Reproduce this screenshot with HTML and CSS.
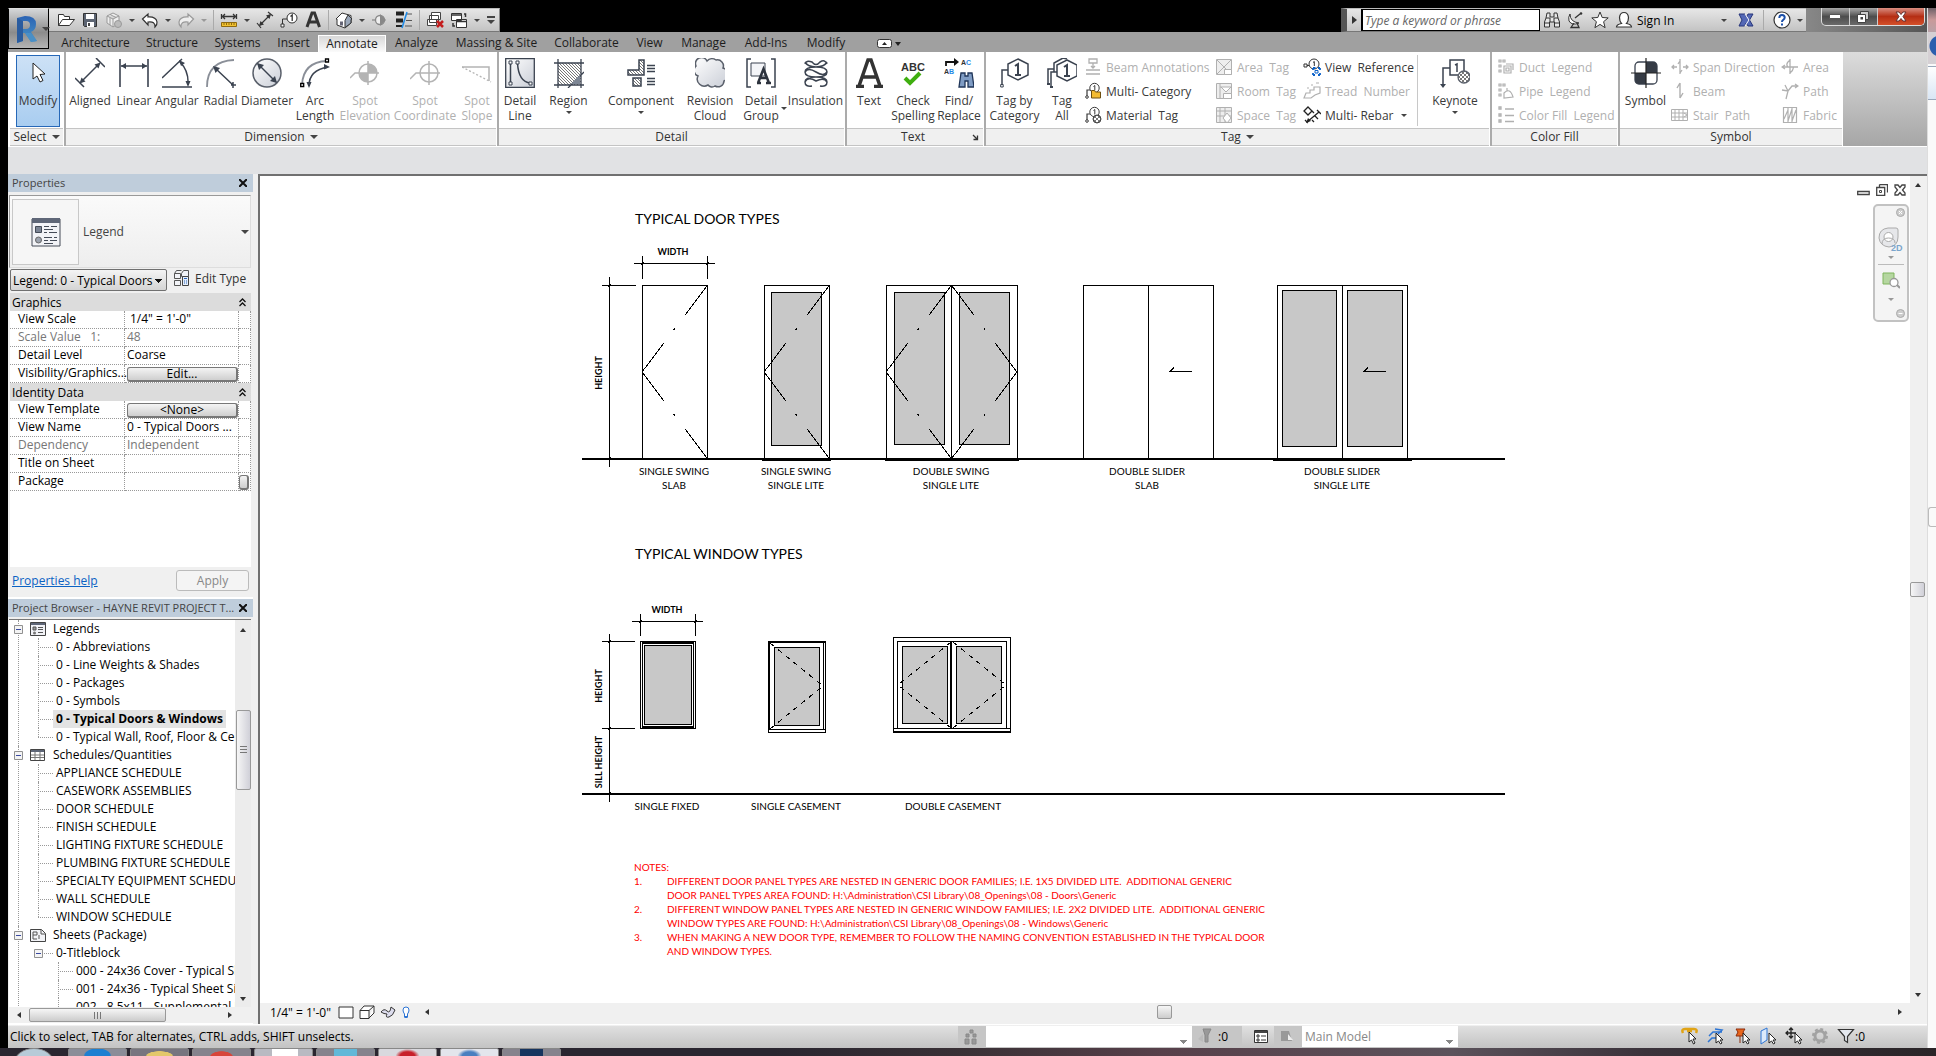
FILE: index.html
```
<!DOCTYPE html>
<html lang="en">
<head>
<meta charset="utf-8">
<title>Legend: 0 - Typical Doors &amp; Windows</title>
<link rel="stylesheet" href="styles.css">
</head>
<body>
<svg class="defs" aria-hidden="true">
  <defs>
    <linearGradient id="steel" x1="0" y1="0" x2="1" y2="1"><stop offset="0" stop-color="#fff"/><stop offset="1" stop-color="#c9cdd6"/></linearGradient>
    <linearGradient id="blueR" x1="0" y1="0" x2="0" y2="1"><stop offset="0" stop-color="#2a63b4"/><stop offset="1" stop-color="#4c97c8"/></linearGradient>
    <pattern id="hatch" width="3" height="3" patternUnits="userSpaceOnUse"><path d="M0 0l3 3" stroke="#777" stroke-width="1"/></pattern>
    <pattern id="check" width="4" height="4" patternUnits="userSpaceOnUse"><rect width="4" height="4" fill="#fff"/><path d="M0 0h2v2H0zM2 2h2v2H2z" fill="#777"/></pattern>
    <symbol id="expander" viewBox="0 0 9 9"><path d="M.5.5h8v8h-8z" fill="#f4f4f4" stroke="#919191"/><path d="M2 4.500h5" stroke="#3a4aa0"/></symbol>
    <symbol id="binoc" viewBox="0 0 18 18"><path d="M4 2h3v4h4V2h3l1 5 1.500 4v5h-5v-5H6.500v5h-5v-5L3 7z" fill="#e8e8e8" stroke="#333"/><path d="M3 7h4v4M15 7h-4v4M2 12h5M11 12h5" fill="none" stroke="#333"/></symbol>
    <symbol id="tag" viewBox="0 0 18 18"><path d="M3 15V8h3" fill="none" stroke="currentColor" stroke-width="1.200"/><circle cx="3" cy="15" r="1.300" fill="#fff" stroke="currentColor"/><circle cx="10.500" cy="6" r="4.700" fill="#fff" stroke="currentColor"/><path d="M9.500 4.500l1.300-1v5" fill="none" stroke="currentColor"/></symbol>
  </defs>
</svg>

<div class="desktop">
<div class="window">
  <header class="titlebar">
    <button class="app-button" aria-label="Application menu">
      <svg width="22" height="28" viewBox="0 0 22 28"><path d="M1 3l8-2q11 0 11 8 0 6-5 8l6 9-6 1-6-9H7v8l-6 2zM7 6v8h3q4 0 4-4t-4-4z" fill="url(#blueR)" fill-rule="evenodd"/><path d="M1 3l6 3v20l-6 2z" fill="#2a5c9f"/><path d="M9 18h6l6 8-6 1z" fill="#4a8fc6"/></svg>
      <i class="dd dd-lg"></i>
    </button>
    <div class="qat">
      <button aria-label="Open"><svg viewBox="0 0 18 18"><path d="M1.500 14.500v-11h5l1 2h5v3M1.500 14.500l4-6h12l-5 6z" fill="#fff" stroke="#333"/></svg></button>
      <button aria-label="Save"><svg viewBox="0 0 18 18"><path d="M2.500 2.500h13v13h-12l-1-1z" fill="#5c6472" stroke="#333"/><path d="M5 3h8v5H5zM6 11h7v5H6z" fill="#fff"/><path d="M7 12h2v3H7z" fill="#444"/></svg></button>
      <button aria-label="Synchronize" disabled><svg viewBox="0 0 18 18"><path d="M2 5l6-3 6 3v7l-6 4-6-4zM2 5l6 3 6-3M8 8v8M5 3.500l6 3M5 7v7" fill="#eee" stroke="#999"/><circle cx="13" cy="13" r="3.500" fill="#bbb" stroke="#999"/></svg></button>
      <button class="drop" aria-label="Synchronize options"><i class="dd"></i></button>
      <button aria-label="Undo"><svg viewBox="0 0 18 18"><path d="M1.500 8L7 3v3q8-.5 9 5 .3 3-2 5 .5-6-7-5v3z" fill="#fff" stroke="#333" stroke-width="1.200"/></svg></button>
      <button class="drop" aria-label="Undo list"><i class="dd"></i></button>
      <button aria-label="Redo" disabled><svg viewBox="0 0 18 18"><path d="M16.500 8L11 3v3q-8-.5-9 5-.3 3 2 5-.5-6 7-5v3z" fill="#eee" stroke="#999" stroke-width="1.200"/></svg></button>
      <button class="drop" aria-label="Redo list"><i class="dd dd-off"></i></button>
      <span class="sep"></span>
      <button aria-label="Measure"><svg viewBox="0 0 18 18"><path d="M1.500 3v5M16.500 3v5M2 5.500h14M5 3L2.500 5.500 5 8M13 3l2.500 2.500L13 8" fill="none" stroke="#333" stroke-width="1.300"/><path d="M1.500 11.500h15v4h-15z" fill="#f2c230" stroke="#8f6a10"/><path d="M4 12v2M6.500 12v2M9 12v2M11.500 12v2M14 12v2" stroke="#8f6a10"/></svg></button>
      <button class="drop" aria-label="Measure options"><i class="dd"></i></button>
      <button aria-label="Aligned dimension"><svg viewBox="0 0 18 18"><path d="M4 14L14 4M1 12l4 5M12 1l5 4" stroke="#333" stroke-width="1.200"/><path d="M3 15l1.500-5L8 13.500zM15 3l-5 1.500L13.500 8z" fill="#333"/></svg></button>
      <button aria-label="Tag by category"><svg viewBox="0 0 18 18"><path d="M2.500 14V8H7" fill="none" stroke="#333"/><path d="M1 13h3v3H1z" fill="#fff" stroke="#333"/><circle cx="12" cy="7" r="5" fill="#fff" stroke="#333"/><path d="M10.500 5.500L12.200 4v6" fill="none" stroke="#333" stroke-width="1.300"/></svg></button>
      <button aria-label="Text"><svg viewBox="0 0 18 18"><path d="M3 16L8 2h2.500l5 14M5 11h8" fill="none" stroke="#333" stroke-width="3"/></svg></button>
      <span class="sep"></span>
      <button aria-label="Default 3D view"><svg viewBox="0 0 18 18"><path d="M1 8l6-6 9 2.500V12l-6 5-8-3V8z" fill="#fff" stroke="#333"/><path d="M10 9.500L13 4l4 4-1 .5V12l-6 4.500z" fill="#9aa7ba" stroke="#333"/><path d="M5 10.500h3v4H5z" fill="#667"/></svg></button>
      <button class="drop" aria-label="3D view options"><i class="dd"></i></button>
      <button aria-label="Section"><svg viewBox="0 0 18 18"><path d="M1 9h3" stroke="#777"/><circle cx="9" cy="9" r="4.500" fill="#eee" stroke="#888" stroke-width="1.300"/><path d="M9 3v12l6-6z" fill="#888"/></svg></button>
      <button aria-label="Thin lines"><svg viewBox="0 0 18 18"><path d="M1 2.500h8M1 9.500h7" stroke="#222" stroke-width="4"/><path d="M1 15h6" stroke="#222" stroke-width="2"/><path d="M11 3h6M11 9.500h6M10 15h7" stroke="#555"/><path d="M12 1L7 17" stroke="#1e8ae6" stroke-width="1.500"/></svg></button>
      <span class="sep"></span>
      <button aria-label="Close hidden windows"><svg viewBox="0 0 18 18"><path d="M5.500 1.500h9v7h-9zM3.500 4.500h9v7h-9zM1.500 8.500h9v6h-9z" fill="#fff" stroke="#444"/><path d="M11 10l6 6M17 10l-6 6" stroke="#c41e1e" stroke-width="2.500"/></svg></button>
      <button aria-label="Switch windows"><svg viewBox="0 0 18 18"><path d="M1.500 2.500h10v7h-10zM6.500 8.500h10v8h-10z" fill="#fff" stroke="#333"/><path d="M2 4h9M7 10.500h9M3 12v3h2M14 3h1.500v3" fill="none" stroke="#333" stroke-width="1.500"/></svg></button>
      <button class="drop" aria-label="Switch windows list"><i class="dd"></i></button>
      <button class="drop" aria-label="Customize toolbar"><i class="dd dd-bar"></i></button>
    </div>
    <div class="info">
      <button class="info-toggle" aria-label="Toggle search"><svg width="5" height="8"><path d="M0 0l5 4-5 4z" fill="#333"/></svg></button>
      <input type="text" placeholder="Type a keyword or phrase" aria-label="Search help">
      <button aria-label="Search"><svg viewBox="0 0 18 18"><use href="#binoc"/></svg></button>
      <button aria-label="Communication center"><svg viewBox="0 0 18 18"><path d="M3 3q0 8 9 9-7 3-10-2-1-4 1-7z" fill="#fff" stroke="#333"/><path d="M8 7l5-4M7 12l-3 4.500h8L10 12" fill="none" stroke="#333" stroke-width="1.300"/><circle cx="14" cy="2.500" r="1.300" fill="#333"/></svg></button>
      <button aria-label="Favorites"><svg viewBox="0 0 18 18"><path d="M9 1l2.200 5.500 6 .4-4.600 3.800 1.500 6L9 13.400 3.900 16.700l1.500-6L.8 6.900l6-.4z" fill="#fff" stroke="#333"/></svg></button>
      <button class="sign-in"><svg viewBox="0 0 18 18"><path d="M1.500 16q0-2.500 5-3.500-2-2-2-6 .5-5 4.500-5t4.500 5q0 4-2 6 5 1 5 3.500z" fill="#fff" stroke="#333" stroke-width="1.200"/></svg><span>Sign In</span><i class="dd"></i></button>
      <button class="exchange" aria-label="Exchange apps"><svg viewBox="0 0 18 18"><path d="M2 3h6l1.500 3L11 3h5l-3.500 6L16 15h-5l-2-3-1.500 3H2l3-6z" fill="#5468b5" stroke="#27357a"/><path d="M8 3l4 6-4 6" fill="none" stroke="#fff"/></svg></button>
      <span class="sep"></span>
      <button class="help" aria-label="Help"><svg viewBox="0 0 18 18"><circle cx="9" cy="9" r="8" fill="#fff" stroke="#333" stroke-width="1.200"/><path d="M6.300 7q0-3 2.700-3t2.700 2.500q0 1.500-1.500 2.300Q9 9.500 9 11M9 12.500v2" fill="none" stroke="#1c50a8" stroke-width="2"/></svg></button>
      <button class="drop" aria-label="Help menu"><i class="dd"></i></button>
    </div>
    <div class="frame-corner">
      <div class="win-buttons">
        <button aria-label="Minimize"><svg width="12" height="5"><path d="M.5.5h11v4H.5z" fill="#fff" stroke="#555"/></svg></button>
        <button aria-label="Restore"><svg width="12" height="12"><path d="M3.500.5h8v8h-8z" fill="#ccc" stroke="#444"/><path d="M.5 3.500h8v8h-8z" fill="#fff" stroke="#444"/><path d="M3.500 6h2.500v2.500H3.500z" fill="#444"/></svg></button>
        <button class="close" aria-label="Close"><svg width="12" height="11"><path d="M1 1h3l2 2.500L8 1h3L8 5.500l3 4.500H8L6 7.500 4 10H1l3-4.500z" fill="#fff" stroke="#633"/></svg></button>
      </div>
    </div>
  </header>

  <nav class="tabs">
    <a href="#architecture">Architecture</a><a href="#structure">Structure</a><a href="#systems">Systems</a><a href="#insert">Insert</a><a href="#annotate" class="active" aria-current="page">Annotate</a><a href="#analyze">Analyze</a><a href="#massing">Massing &amp; Site</a><a href="#collaborate">Collaborate</a><a href="#view">View</a><a href="#manage">Manage</a><a href="#addins">Add-Ins</a><a href="#modify">Modify</a>
    <button class="ribbon-toggle" aria-label="Minimize ribbon"><svg width="24" height="9"><rect x=".5" y=".5" width="14" height="8" rx="2" fill="#fff" stroke="#333"/><path d="M5 6l2.500-3L10 6zM18 3h6l-3 4z" fill="#222"/></svg></button>
  </nav>

  <section class="ribbon">
    <div class="panel p-select">
      <div class="tools"><button class="tool on"><svg class="big" viewBox="0 0 30 30"><path d="M10 5v16l4-3 3 6 3-1.500-3-6 5-.5z" fill="#fff" stroke="#222"/></svg><span>Modify</span></button></div>
      <h2>Select <i class="dd dd-lg"></i></h2>
    </div>
    <div class="panel p-dim">
      <div class="tools">
        <button class="tool"><svg class="big" viewBox="0 0 30 30"><path d="M6 24L24 6M0 20l9 9M21 0l9 9" stroke="#3b4350" stroke-width="1.500"/><path d="M4.500 25.500l2-6 4 4zM25.500 4.500l-6 2 4 4z" fill="#3b4350"/></svg><span>Aligned</span></button>
        <button class="tool"><svg class="big" viewBox="0 0 30 30"><path d="M1 1v28M29 1v28M2 8h26" stroke="#3b4350" stroke-width="1.600"/><path d="M2 8l5-3v6zM28 8l-5-3v6z" fill="#3b4350"/></svg><span>Linear</span></button>
        <button class="tool"><svg class="big" viewBox="0 0 30 30"><path d="M0 20L20 1M0 29h30M18 4q9 9 8 23" fill="none" stroke="#3b4350" stroke-width="1.500"/><path d="M17 2l6 3-4 3zM26 29l-2.500-6h5z" fill="#3b4350"/></svg><span>Angular</span></button>
        <button class="tool"><svg class="big" viewBox="0 0 30 30"><path d="M1 29Q1 3 28 2" fill="none" stroke="#8a8f98" stroke-width="1.800"/><path d="M9 10l18 17M25 27h5M27 24v6" stroke="#3b4350" stroke-width="1.500"/><path d="M7 8l7 2-4.500 5z" fill="#3b4350"/></svg><span>Radial</span></button>
        <button class="tool"><svg class="big" viewBox="0 0 30 30"><circle cx="15" cy="15" r="14" fill="url(#steel)" stroke="#5a606b" stroke-width="1.500"/><path d="M6 6l18 18" stroke="#3b4350" stroke-width="1.500"/><path d="M5 5l7 2-5 5zM25 25l-2-7-5 5z" fill="#3b4350"/></svg><span>Diameter</span></button>
        <button class="tool"><svg class="big" viewBox="0 0 30 30"><path d="M2 27Q3 4 27 3" fill="none" stroke="#8a8f98" stroke-width="1.800"/><path d="M9 28Q9 12 28 9" fill="none" stroke="#3b4350" stroke-width="1.600"/><path d="M9 30l-2.500-6h5zM30 9l-6-3v5.500z" fill="#3b4350"/><path d="M.7 25.500h3v3h-3zM25.500 1h3v3h-3z" fill="#fff" stroke="#000" stroke-width="1.300"/></svg><span>Arc<br>Length</span></button>
        <button class="tool" disabled><svg class="big" viewBox="0 0 30 30"><path d="M0 20l5-5h24M18 3v24" fill="none" stroke="#b4b4b4" stroke-width="1.500"/><circle cx="18" cy="15" r="9" fill="none" stroke="#b4b4b4" stroke-width="1.500"/><path d="M18 15V6a9 9 0 0 1 9 9zM18 15v9a9 9 0 0 1-9-9z" fill="#b4b4b4"/></svg><span>Spot<br>Elevation</span></button>
        <button class="tool" disabled><svg class="big" viewBox="0 0 30 30"><path d="M0 21l6-6h24M19 3v24" fill="none" stroke="#b4b4b4" stroke-width="1.500"/><circle cx="19" cy="15" r="9" fill="none" stroke="#b4b4b4" stroke-width="1.500"/></svg><span>Spot<br>Coordinate</span></button>
        <button class="tool" disabled><svg class="big" viewBox="0 0 30 30"><path d="M0 9h27v14" fill="none" stroke="#b4b4b4" stroke-width="1.500"/><path d="M0 9l29 15" stroke="#b4b4b4" stroke-width="1.300" stroke-dasharray="2 2"/></svg><span>Spot<br>Slope</span></button>
      </div>
      <h2>Dimension <i class="dd dd-lg"></i></h2>
    </div>
    <div class="panel p-detail">
      <div class="tools">
        <button class="tool"><svg class="big" viewBox="0 0 30 30"><path d="M.7.700h28.600v28.600H.7z" fill="url(#steel)" stroke="#3b4350" stroke-width="1.300"/><path d="M5.500 5v20M12.500 5q1 19 13 20" fill="none" stroke="#3b4350" stroke-width="1.500"/><path d="M4 3h3v3H4zM11 3h3v3h-3zM4 24h3v3H4zM24 24h3v3h-3z" fill="#fff" stroke="#3b4350"/></svg><span>Detail<br>Line</span></button>
        <button class="tool"><svg class="big" viewBox="0 0 30 30"><path d="M4 5h23v22H4z" fill="url(#hatch)"/><path d="M0 5h30M0 27h30M4 1v29M27 1v29M14 30L30 14" stroke="#3b4350" stroke-width="1.300"/><path d="M17 26h9v-9z" fill="#7d8694"/></svg><span>Region</span><i class="dd"></i></button>
        <button class="tool"><svg class="big" viewBox="0 0 30 30"><path d="M13 2h5v15H2v-5h11zM7 20h8v8H7z" fill="url(#hatch)" stroke="#3b4350" stroke-width="1.500"/><path d="M21 7.500h8M21 10.500h8M21 13.500h8M21 20.500h8M21 23.500h8M21 26.500h8" stroke="#3b4350" stroke-width="1.500"/></svg><span>Component</span><i class="dd"></i></button>
        <button class="tool"><svg class="big" viewBox="0 0 30 30"><path d="M12 3a7 7 0 0 1 9-1 6 6 0 0 1 7 8 7 7 0 0 1 1 13 6 6 0 0 1-9 5 5 5 0 0 1-7-1 7 7 0 0 1-10-9 6 6 0 0 1-2-10 6 6 0 0 1 11-5z" fill="url(#steel)" stroke="#5a606b" stroke-width="1.500"/></svg><span>Revision<br>Cloud</span></button>
        <button class="tool side"><svg class="big" viewBox="0 0 30 30"><path d="M5 1H1v28h4M25 1h4v28h-4" fill="none" stroke="#3b4350" stroke-width="1.500"/><path d="M5 5h14v13H5z" fill="#f4f5f8" stroke="#3b4350"/><path d="M12 25l5.500-14L23 25M14 20h7M11 25h4M20 25h5" fill="none" stroke="#2c323d" stroke-width="2.500"/></svg><span>Detail<br>Group</span><i class="dd"></i></button>
        <button class="tool"><svg class="big" viewBox="0 0 30 30"><path d="M4 4q3 5 11 5 11 0 11 5t-11 5Q4 19 4 24t7 4M26 4q-3 5-11 5Q4 9 4 14t11 5q11 0 11 5t-7 4M4 6q1-4 7-2 4 5 8 0 5-3 7 2M4 14q3-5 11 0 8 5 11 0M4 24q3-6 11-1 8-4 11 1" fill="none" stroke="#3b4350" stroke-width="1.500"/></svg><span>Insulation</span></button>
      </div>
      <h2>Detail</h2>
    </div>
    <div class="panel p-text">
      <div class="tools">
        <button class="tool"><svg class="big" viewBox="0 0 30 30"><path d="M5 28L14 2h3l9 26M8 19h14M2 28.500h8M20 28.500h9" fill="none" stroke="#333" stroke-width="3.500"/></svg><span>Text</span></button>
        <button class="tool"><svg class="big" viewBox="0 0 30 30"><text x="15" y="13" class="t-abc">ABC</text><path d="M7 20l5 5L22 15" fill="none" stroke="#3fae10" stroke-width="4"/></svg><span>Check<br>Spelling</span></button>
        <button class="tool"><svg class="big" viewBox="0 0 30 30"><path d="M2 8V4h9" fill="none" stroke="#111" stroke-width="1.800"/><path d="M10 0l5 4-5 4z" fill="#111"/><text x="17" y="7" class="t-mini">A<tspan fill="#1e8ae6">C</tspan></text><text x="0" y="16" class="t-mini">A<tspan fill="#1e8ae6">B</tspan></text><path d="M17 15h4v3h3v-3h4l2 14h-6v-6h-3v6h-6z" fill="#7f9cc4" stroke="#1f3558" stroke-width="1.300"/></svg><span>Find/<br>Replace</span></button>
      </div>
      <h2>Text<svg class="launcher" width="7" height="7"><path d="M1 1l4 4M5.500 1.500v4h-4" fill="none" stroke="#333" stroke-width="1.300"/></svg></h2>
    </div>
    <div class="panel p-tag">
      <div class="tools">
        <button class="tool"><svg class="big" viewBox="0 0 30 30"><path d="M2 27V12h6" fill="none" stroke="#3b4350" stroke-width="1.500"/><path d="M.7 26.500h2.500v2.500H.7z" fill="#fff" stroke="#3b4350"/><path d="M18 1l10 5v11l-10 5-10-5V6z" fill="#fff" stroke="#3b4350" stroke-width="1.500"/><path d="M15 8l3-2v11M15 17h6" fill="none" stroke="#3b4350" stroke-width="2"/></svg><span>Tag by<br>Category</span></button>
        <button class="tool"><svg class="big" viewBox="0 0 30 30"><path d="M1 26V11h6M4 28V14h6M7 14V5l9-5 4 1" fill="none" stroke="#3b4350" stroke-width="1.500"/><path d="M0 26h3M3 29h3" stroke="#3b4350" stroke-width="2"/><path d="M20 2l10 5v11l-10 5-10-5V7z" fill="#fff" stroke="#3b4350" stroke-width="1.500"/><path d="M17 9l3-2v11M17 18h6" fill="none" stroke="#3b4350" stroke-width="2"/></svg><span>Tag<br>All</span></button>
        <div class="small col-a">
          <button disabled><svg viewBox="0 0 18 18"><path d="M5 1h8v4H5zM9 5v5M7 8l2 2 2-2M2 12h14M2 16h14" fill="none" stroke="currentColor" stroke-width="1.300"/></svg>Beam Annotations</button>
          <button><svg viewBox="0 0 18 18"><use href="#tag"/><path d="M7.500 8.500h3l1 1.500h5v6h-9z" fill="#f4bb32" stroke="#6e4f10"/></svg>Multi- Category</button>
          <button><svg viewBox="0 0 18 18"><use href="#tag"/><circle cx="13" cy="13" r="4" fill="url(#check)" stroke="#444"/></svg>Material&nbsp; Tag</button>
        </div>
        <div class="small col-b">
          <button disabled><svg viewBox="0 0 18 18"><path d="M1.500 1.500h15v15h-15zM2 2l14 14M16 2L2 16" fill="#eee" stroke="currentColor"/><path d="M9.500 11.500h7v5h-7z" fill="#fff" stroke="currentColor"/></svg>Area&nbsp; Tag</button>
          <button disabled><svg viewBox="0 0 18 18"><path d="M1.500 1.500h15v15h-15zM5 2v14M5 5h11M6 5l5 5 5-5" fill="#eee" stroke="currentColor"/><path d="M8.500 11.500h8v5h-8z" fill="#fff" stroke="currentColor"/></svg>Room&nbsp; Tag</button>
          <button disabled><svg viewBox="0 0 18 18"><path d="M1.500 1.500h15v15h-15zM5 2v14M2 5h14M10 2v14M2 10h14" fill="#eee" stroke="currentColor"/><path d="M12 7l4 5-4 5-4-5z" fill="#fff" stroke="currentColor"/></svg>Space&nbsp; Tag</button>
        </div>
        <div class="small col-c">
          <button><svg viewBox="0 0 18 18"><path d="M1 6h3v3H1zM4 7.500h3" fill="none" stroke="#333"/><circle cx="11" cy="6" r="5" fill="#fff" stroke="#333"/><path d="M10 4.500l1.300-1V8" fill="none" stroke="#333"/><path d="M10 10h2.500M15 10h2M10 17v-2M17 17v-2M10 10v2M17 10v2M10 17h2M15 17h2" stroke="#0d62c9" stroke-width="1.800"/><path d="M12 12.500h3v2.500h-3z" fill="#fff" stroke="#0d62c9"/></svg>View&nbsp; Reference</button>
          <button disabled><svg viewBox="0 0 18 18"><path d="M1 16l2-5h4V8h4V5h6v6l-5 2-4 3zM4 6h2M8 3h2M13 1h3" fill="none" stroke="currentColor" stroke-width="1.200"/></svg>Tread&nbsp; Number</button>
          <button><svg viewBox="0 0 18 18"><path d="M5 1l4 4-4 4-4-4zM9 5l2 2M4 16L16 6M2 14l3 3M14 4l4 4M9 14l2 2M12 10l3 3" fill="none" stroke="#222" stroke-width="1.300"/><path d="M3 17l2-5 3 3z" fill="#222"/></svg>Multi- Rebar&nbsp; <i class="dd"></i></button>
        </div>
        <span class="divider"></span>
        <button class="tool key"><svg class="big" viewBox="0 0 30 30"><path d="M3 27V10h7V2h14v15H10v-7" fill="none" stroke="#3b4350" stroke-width="1.500"/><path d="M3 30l-3-4h6z" fill="#3b4350"/><path d="M15 7l2-1v8" fill="none" stroke="#3b4350" stroke-width="1.500"/><circle cx="24" cy="19" r="6" fill="url(#check)" stroke="#5a606b" stroke-width="1.300"/></svg><span>Keynote</span><i class="dd"></i></button>
      </div>
      <h2>Tag <i class="dd dd-lg"></i></h2>
    </div>
    <div class="panel p-fill">
      <div class="tools">
        <div class="small">
          <button disabled><svg viewBox="0 0 18 18"><path d="M2 2h2v2H2zM6 2h2v2H6zM2 7h2v2H2zM2 12h2v2H2zM7 8h7v7H7zM9 6h7v6M9 10h3v3H9z" fill="none" stroke="currentColor" stroke-width="1.200"/></svg>Duct&nbsp; Legend</button>
          <button disabled><svg viewBox="0 0 18 18"><path d="M2 2h2v2H2zM6 2h2v2H6zM2 7h2v2H2zM2 12h2v2H2zM7 11q6-6 9 4l-9 1zM10 9V6" fill="none" stroke="currentColor" stroke-width="1.200"/></svg>Pipe&nbsp; Legend</button>
          <button disabled><svg viewBox="0 0 18 18"><path d="M2 1h2v2H2zM2 8h2v2H2zM2 14h2v2H2zM8 3h9M8 9.500h9M8 15.500h9" fill="none" stroke="currentColor" stroke-width="1.300"/></svg>Color Fill&nbsp; Legend</button>
        </div>
      </div>
      <h2>Color Fill</h2>
    </div>
    <div class="panel p-symbol">
      <div class="tools">
        <button class="tool"><svg class="big" viewBox="0 0 30 30"><rect x="4" y="4" width="22" height="22" rx="4" fill="#fff" stroke="#3b4350" stroke-width="1.300"/><path d="M15 4h7q4 0 4 4v7H15zM15 26H8q-4 0-4-4v-7h11z" fill="#353b45"/><path d="M15 0v30M0 15h30" stroke="#222" stroke-width="1.200"/></svg><span>Symbol</span></button>
        <div class="small col-d">
          <button disabled><svg viewBox="0 0 18 18"><path d="M9 1v15M9 3L7 6M9 15l2-3M1 9h5M12 9h5M3 7L1 9l2 2M15 7l2 2-2 2" fill="none" stroke="currentColor" stroke-width="1.300"/></svg>Span Direction</button>
          <button disabled><svg viewBox="0 0 18 18"><path d="M9 1v15M9 1L6 6M9 16l3-5" fill="none" stroke="currentColor" stroke-width="1.400"/></svg>Beam</button>
          <button disabled><svg viewBox="0 0 18 18"><path d="M.5 3.500h16v11H.500zM1 7h15M1 11h15M4 4v10M8 4v10M12 4v10M13 7l3 2-3 2" fill="none" stroke="currentColor"/></svg>Stair&nbsp; Path</button>
        </div>
        <div class="small col-e">
          <button disabled><svg viewBox="0 0 18 18"><path d="M9 1v15M9 2q-5 4-2 7M9 15q4-3 3-6M1 9h16M4 7L1 9l3 2" fill="none" stroke="currentColor" stroke-width="1.300"/></svg>Area</button>
          <button disabled><svg viewBox="0 0 18 18"><path d="M1 8l6 1 4-5h6M14 2l3 2-3 2M7 9l-2 8M4 3l3 6" fill="none" stroke="currentColor" stroke-width="1.300"/></svg>Path</button>
          <button disabled><svg viewBox="0 0 18 18"><path d="M2.500 1.500h13v15h-13zM7 2v14M11 2v14M3 13L7 4M7 15l4-12M11 15l4-11" fill="none" stroke="currentColor" stroke-width="1.200"/></svg>Fabric</button>
        </div>
      </div>
      <h2>Symbol</h2>
    </div>
    <div class="ribbon-rest"></div>
  </section>

  <div class="options-bar"></div>

  <main class="work">
    <aside class="dock">
      <section class="properties">
        <div class="palette-head"><h3>Properties</h3><button aria-label="Close properties"><svg width="8" height="8"><path d="M0 0l8 8M8 0L0 8" stroke="#111" stroke-width="2"/></svg></button></div>
        <button class="type-selector">
          <span class="thumb"><svg width="30" height="30"><path d="M1 2h28v27H1z" fill="#f2f3f7" stroke="#444b57"/><path d="M1 1h28v5H1z" fill="#5f6778"/><path d="M4.500 9.500h6v6h-6z" fill="#7b8494" stroke="#444b57"/><circle cx="7.500" cy="23" r="3" fill="#9da4b0" stroke="#666"/><path d="M13 9.500h5M20 9.500h6M13 12.500h9M13 15.500h3M18 15.500h8M13 20.500h8M23 20.500h3M13 23.500h4M19 23.500h7M13 26.500h9" stroke="#444b57"/></svg></span>
          <span>Legend</span><i class="dd dd-lg"></i>
        </button>
        <div class="instance">
          <select aria-label="Instance"><option>Legend: 0 - Typical Doors</option></select>
          <button class="edit-type"><svg width="17" height="16"><path d="M1.500 3.500h6v5h-6zM1.500 10.500h6v5h-6zM8.500 3.500l2-3h5v6h-7zM1.500 3.500l2-3h5" fill="#f2f3f7" stroke="#555"/><path d="M9.500 6.500h6v9h-6z" fill="#e4eefb" stroke="#444"/><path d="M11 8.500h3M11 11h1M13 11h1M11 13h1M13 13h1" stroke="#2c62b5"/></svg>Edit Type</button>
        </div>
        <div class="grid">
          <table>
            <colgroup><col class="c-name"><col><col class="c-link"></colgroup>
            <tbody>
              <tr class="group"><th colspan="2">Graphics</th><td><svg width="7" height="9"><path d="M.5 4l3-3 3 3M.5 8l3-3 3 3" fill="none" stroke="#111" stroke-width="1.300"/></svg></td></tr>
              <tr><th>View Scale</th><td class="in">1/4" = 1'-0"</td><td></td></tr>
              <tr class="ro"><th>Scale Value&nbsp;&nbsp; 1:</th><td>48</td><td></td></tr>
              <tr><th>Detail Level</th><td>Coarse</td><td></td></tr>
              <tr><th>Visibility/Graphics...</th><td><button>Edit...</button></td><td></td></tr>
              <tr class="group"><th colspan="2">Identity Data</th><td><svg width="7" height="9"><path d="M.5 4l3-3 3 3M.5 8l3-3 3 3" fill="none" stroke="#111" stroke-width="1.300"/></svg></td></tr>
              <tr><th>View Template</th><td><button>&lt;None&gt;</button></td><td></td></tr>
              <tr><th>View Name</th><td>0 - Typical Doors ...</td><td></td></tr>
              <tr class="ro"><th>Dependency</th><td>Independent</td><td></td></tr>
              <tr><th>Title on Sheet</th><td></td><td></td></tr>
              <tr><th>Package</th><td></td><td><button aria-label="Associate parameter"></button></td></tr>
            </tbody>
          </table>
        </div>
        <footer><a href="#help">Properties help</a><button disabled>Apply</button></footer>
      </section>

      <section class="browser">
        <div class="palette-head"><h3>Project Browser - HAYNE REVIT PROJECT T...</h3><button aria-label="Close project browser"><svg width="8" height="8"><path d="M0 0l8 8M8 0L0 8" stroke="#111" stroke-width="2"/></svg></button></div>
        <div class="tree-wrap">
          <div class="tree">
            <ul class="root">
              <li><div class="node"><svg class="ex"><use href="#expander"/></svg><svg class="ic" viewBox="0 0 16 16"><path d="M.5 1.500h15v13H.500z" fill="#f2f3f7" stroke="#444"/><path d="M1 2h14v2H1z" fill="#5f6778"/><path d="M3 6h3v3H3zM8 6.500h5M8 8.500h5M8 11.500h5" stroke="#555" fill="#999"/><circle cx="4.500" cy="12" r="1.500" fill="#777"/></svg>Legends</div>
                <ul><li>0 - Abbreviations</li><li>0 - Line Weights &amp; Shades</li><li>0 - Packages</li><li>0 - Symbols</li><li><b>0 - Typical Doors &amp; Windows</b></li><li>0 - Typical Wall, Roof, Floor &amp; Ceil</li></ul></li>
              <li><div class="node"><svg class="ex"><use href="#expander"/></svg><svg class="ic" viewBox="0 0 16 16"><path d="M.5 2.500h14v11H.500z" fill="#fff" stroke="#444"/><path d="M1 3h13v2H1z" fill="#5f6778"/><path d="M5 5v8M1 8h13M1 10.500h13M10 5v8" stroke="#777"/></svg>Schedules/Quantities</div>
                <ul><li>APPLIANCE SCHEDULE</li><li>CASEWORK ASSEMBLIES</li><li>DOOR SCHEDULE</li><li>FINISH SCHEDULE</li><li>LIGHTING FIXTURE SCHEDULE</li><li>PLUMBING FIXTURE SCHEDULE</li><li>SPECIALTY EQUIPMENT SCHEDUL</li><li>WALL SCHEDULE</li><li>WINDOW SCHEDULE</li></ul></li>
              <li><div class="node"><svg class="ex"><use href="#expander"/></svg><svg class="ic" viewBox="0 0 16 16"><path d="M.5 2.500h11l4 4v8H.500z" fill="#f2f3f7" stroke="#444"/><path d="M11 3v4h4M3 5h4v3H3zM3 8v4h4M9 8v4" fill="none" stroke="#555"/></svg>Sheets (Package)</div>
                <ul><li class="open"><div class="node"><svg class="ex"><use href="#expander"/></svg>0-Titleblock</div>
                  <ul><li>000 - 24x36 Cover - Typical Sheet</li><li>001 - 24x36 - Typical Sheet Size</li><li>002 - 8.5x11 - Supplemental Drawing</li></ul></li></ul></li>
            </ul>
          </div>
          <div class="vbar tree-v"><i class="up"></i><span class="handle"></span><i class="down"></i></div>
        </div>
        <div class="hbar tree-h"><i class="left"></i><span class="handle"></span><i class="right"></i></div>
      </section>
    </aside>

    <section class="view">
      <div class="view-top">
        <div class="canvas">
          <svg class="drawing" role="img" aria-label="Typical door and window types">
            <g transform="translate(-260 -176)" shape-rendering="crispEdges" fill="none" stroke="#000">
              <g>
                <path d="M634 263.500h81M642.500 256v23M707.500 256v23M609.500 277v190M602 285.500h34"/>
                <path d="M632 621.500h71M640.500 614v22M695.500 614v22M609.500 634v168M602 641.500h33M602 728.500h33"/>
                <path d="M641 265l3-3M706 265l3-3M608 287l3-3M608 460l3-3M639 623l3-3M694 623l3-3M608 643l3-3M608 730l3-3M608 795l3-3"/>
                <path d="M642.500 285.500h65v173h-65zM764.500 285.500h65v173h-65zM886.500 285.500h131v173h-131zM951.500 286v172M1083.500 285.500h130v173h-130zM1148.500 286v172M1277.500 285.500h130v173h-130zM1342.500 286v172"/>
              </g>
              <g fill="#c8c8c8">
                <path d="M771.500 292.500h50v153h-50zM894.500 292.500h50v152h-50zM959.500 292.500h50v152h-50zM1282.500 290.500h54v156h-54zM1347.500 290.500h55v156h-55z"/>
                <path d="M644.500 645.500h47v79h-47zM774.500 647.500h45v78h-45zM902.500 646.500h45v77h-45zM956.500 646.500h45v77h-45z"/>
              </g>
              <g class="swing">
                <path d="M707 286l-65 86"/><path d="M707 458l-65-86"/><path d="M829 286l-65 86"/><path d="M829 458l-65-86"/>
                <path d="M951 286l-65 86"/><path d="M951 458l-65-86"/><path d="M952 286l65 86"/><path d="M952 458l65-86"/>
              </g>
              <path d="M1192 371.500h-22l4-4M1386 371.500h-22l4-4"/>
              <path d="M582 459h923M582 794h923" stroke-width="2"/>
              <path d="M762 460h69M885 460h134M1273 460h139" stroke-width="2"/>
              <path d="M640.500 641.500h55v87h-55zM642.500 643.500h51v83h-51zM642 642.500h52M642 727.500h52"/>
              <path d="M768.500 641.500h57v91h-57zM769.500 642.500h54v87h-54zM768 729.500h58M769 642.500h56"/>
              <path d="M893.500 637.500h117v95h-117zM897.500 641.500h109v87h-109zM893 728.500h118M893 731.500h118M951.500 642v87M950.500 642v87"/>
              <g class="hinge"><path d="M770 643l53 43"/><path d="M770 729l53-43"/><path d="M951 642l-53 43"/><path d="M951 728l-53-43"/><path d="M953 642l53 43"/><path d="M953 728l53-43"/></g>
            </g>
            <g transform="translate(-260 -176)" class="lettering">
              <g class="heading"><text x="635" y="224">TYPICAL DOOR TYPES</text><text x="635" y="559">TYPICAL WINDOW TYPES</text></g>
              <g class="dim"><text x="673" y="255">WIDTH</text><text x="667" y="613">WIDTH</text><text transform="translate(602 373) rotate(-90)">HEIGHT</text><text transform="translate(602 686) rotate(-90)">HEIGHT</text><text transform="translate(602 762) rotate(-90)">SILL HEIGHT</text></g>
              <g class="label">
                <text x="674" y="475">SINGLE SWING<tspan x="674" dy="14">SLAB</tspan></text>
                <text x="796" y="475">SINGLE SWING<tspan x="796" dy="14">SINGLE LITE</tspan></text>
                <text x="951" y="475">DOUBLE SWING<tspan x="951" dy="14">SINGLE LITE</tspan></text>
                <text x="1147" y="475">DOUBLE SLIDER<tspan x="1147" dy="14">SLAB</tspan></text>
                <text x="1342" y="475">DOUBLE SLIDER<tspan x="1342" dy="14">SINGLE LITE</tspan></text>
                <text x="667" y="810">SINGLE FIXED</text><text x="796" y="810">SINGLE CASEMENT</text><text x="953" y="810">DOUBLE CASEMENT</text>
              </g>
              <g class="notes">
                <text x="634" y="871">NOTES:</text>
                <text x="634" y="885">1.</text><text x="667" y="885">DIFFERENT DOOR PANEL TYPES ARE NESTED IN GENERIC DOOR FAMILIES; I.E. 1X5 DIVIDED LITE.&nbsp; ADDITIONAL GENERIC</text>
                <text x="667" y="899">DOOR PANEL TYPES AREA FOUND: H:\Administration\CSI Library\08_Openings\08 - Doors\Generic</text>
                <text x="634" y="913">2.</text><text x="667" y="913">DIFFERENT WINDOW PANEL TYPES ARE NESTED IN GENERIC WINDOW FAMILIES; I.E. 2X2 DIVIDED LITE.&nbsp; ADDITIONAL GENERIC</text>
                <text x="667" y="927">WINDOW TYPES ARE FOUND: H:\Administration\CSI Library\08_Openings\08 - Windows\Generic</text>
                <text x="634" y="941">3.</text><text x="667" y="941">WHEN MAKING A NEW DOOR TYPE, REMEMBER TO FOLLOW THE NAMING CONVENTION ESTABLISHED IN THE TYPICAL DOOR</text>
                <text x="667" y="955">AND WINDOW TYPES.</text>
              </g>
            </g>
          </svg>
          <div class="mdi">
            <button aria-label="Minimize view"><svg width="13" height="12"><path d="M.7 7.500h11.500v3H.7z" fill="#fff" stroke="#444" stroke-width="1.300"/></svg></button>
            <button aria-label="Restore view"><svg width="12" height="12"><path d="M3.500.5h8v8M.7 3.500h8v8h-8zM3.500 3V.500" fill="none" stroke="#444" stroke-width="1.300"/><path d="M3.500 6.500h2v2h-2z" fill="none" stroke="#444"/></svg></button>
            <button aria-label="Close view"><svg width="12" height="12"><path d="M1 1h3l2 2.500L8 1h3v2L8.500 6 11 9v2H8L6 8.500 4 11H1V9l2.500-3L1 3z" fill="#fff" stroke="#444" stroke-width="1.300"/></svg></button>
          </div>
          <div class="navbar">
            <button class="corner" aria-label="Close navigation bar"><svg width="9" height="9"><circle cx="4.500" cy="4.500" r="4" fill="#ccc" stroke="#aaa"/><path d="M3 3l3 3M6 3L3 6" stroke="#fff"/></svg></button>
            <button aria-label="Steering wheel 2D"><svg width="26" height="26"><path d="M10 1h8q2 0 2 2v7q0 9-9 10-9-1-10-9 0-9 9-10z" fill="#e6e7ea" stroke="#aaa"/><circle cx="10.500" cy="10" r="4.500" fill="#fff" stroke="#aaa"/><path d="M4 17q0-6 6.500-6t6.500 5" fill="none" stroke="#aaa"/><text x="13" y="24" class="t-2d">2D</text></svg></button>
            <i class="dd"></i>
            <hr>
            <button aria-label="Zoom region"><svg width="18" height="18"><path d="M1 2h11v11H1z" fill="#b5d6a0" stroke="#7fb55d"/><circle cx="12" cy="11.500" r="4" fill="#fff" stroke="#999" stroke-width="1.300"/><path d="M15 14l3 3" stroke="#999" stroke-width="2"/></svg></button>
            <i class="dd"></i>
            <button class="corner low" aria-label="Navigation bar options"><svg width="9" height="9"><circle cx="4.500" cy="4.500" r="4" fill="#ccc" stroke="#aaa"/><path d="M2.500 4.500h4" stroke="#fff"/></svg></button>
          </div>
        </div>
        <div class="vbar view-v"><i class="up"></i><span class="handle"></span><i class="down"></i></div>
      </div>
      <div class="view-bar">
        <button class="scale">1/4" = 1'-0"</button>
        <button aria-label="Detail level"><svg width="16" height="14"><path d="M1 2h14v11H1z" fill="#fff" stroke="#333"/></svg></button>
        <button aria-label="Visual style"><svg width="16" height="14"><path d="M1 5.500h9v8H1zM1 5.500L5 1h10l-5 4.500M15 1v7l-5 5" fill="#fff" stroke="#333"/></svg></button>
        <button aria-label="Crop view"><svg width="16" height="14"><path d="M1 7q3-4 6-1t4-4l4 3q-2 6-6 7t-2-3q-3 0-6-2z" fill="#dde" stroke="#333"/></svg></button>
        <button aria-label="Reveal hidden elements"><svg width="10" height="14"><path d="M3.500 9Q2 7 2 5q0-3 3-3t3 3q0 2-1.500 4v3h-3z" fill="#fff" stroke="#2c74d4"/><path d="M3.500 12h3" stroke="#2c74d4" stroke-width="2"/></svg></button>
        <div class="hbar view-h"><i class="left"></i><span class="handle"></span><i class="right"></i></div>
      </div>
    </section>
  </main>

  <footer class="status">
    <p>Click to select, TAB for alternates, CTRL adds, SHIFT unselects.</p>
    <div class="worksets">
      <button class="flat" aria-label="Worksets"><svg viewBox="0 0 18 18"><path d="M4 7h3v3H4zM11 7h3v3h-3zM8 3h3v3H8zM3 12h4v5H3zM10 12h4v5h-4z" fill="#999" stroke="#888"/></svg></button>
      <select class="ws" aria-label="Active workset"><option></option></select>
      <button class="flat wide"><svg viewBox="0 0 18 18"><path d="M7 2h8l-3 6v7H9V8z" fill="#999" stroke="#888"/><path d="M2 12l5-5v8z" fill="#bbb"/></svg>:0</button>
    </div>
    <div class="options">
      <button aria-label="Design options"><svg viewBox="0 0 18 18"><path d="M2.500 3.500h13v12h-13z" fill="#fff" stroke="#333"/><path d="M3 4h12v2H3z" fill="#444"/><path d="M5 8h2v2H5zM5 12h2v2H5zM9 9h5M9 13h5" fill="none" stroke="#333"/></svg></button>
      <button class="flat" aria-label="Add to set"><svg viewBox="0 0 18 18"><path d="M3 4h8l3 10H3z" fill="#999"/><path d="M10 7l5 6h-5z" fill="#eee"/></svg></button>
      <select class="model" aria-label="Design option" disabled><option>Main Model</option></select>
    </div>
    <div class="selection">
      <button aria-label="Select links"><svg viewBox="0 0 18 18"><path d="M2 6q-2-4 2-4h9q4 0 2 4M6 4h5" fill="none" stroke="#e0a315" stroke-width="2.500"/><path d="M8 5v10l2.500-2 2 4 1.500-1-2-4h3z" fill="#fff" stroke="#222"/></svg></button>
      <button aria-label="Select underlay elements"><svg viewBox="0 0 18 18"><path d="M1 15l4-4h7M2 9l4-4h9M8 2l7 1-4 4" fill="none" stroke="#2c74d4" stroke-width="1.500"/><path d="M9 6v10l2.500-2 2 3 1.500-1-2-3h3z" fill="#fff" stroke="#222"/></svg></button>
      <button aria-label="Select pinned elements"><svg viewBox="0 0 18 18"><path d="M3 2h9l-2 3 2 4H3l2-4zM7 9v7" fill="#e8661c" stroke="#8d2d0c"/><path d="M10 6v10l2.500-2 2 3 1.500-1-2-3h3z" fill="#fff" stroke="#222"/></svg></button>
      <button aria-label="Select by face"><svg viewBox="0 0 18 18"><path d="M2 4l6-3v12l-6 4z" fill="#dbe9fa" stroke="#2c74d4"/><path d="M10 6v10l2.500-2 2 3 1.500-1-2-3h3z" fill="#fff" stroke="#222"/></svg></button>
      <button aria-label="Drag on selection"><svg viewBox="0 0 18 18"><path d="M6 1v10M1 6h10M4 3l2-2 2 2M4 9l2 2 2-2M3 4L1 6l2 2" fill="none" stroke="#222" stroke-width="1.300"/><path d="M10 6v10l2.500-2 2 3 1.500-1-2-3h3z" fill="#fff" stroke="#222"/></svg></button>
      <button aria-label="Background processes"><svg viewBox="0 0 18 18"><circle cx="9" cy="9" r="5" fill="none" stroke="#a2a2a2" stroke-width="3"/><circle cx="9" cy="9" r="7" fill="none" stroke="#a2a2a2" stroke-width="2" stroke-dasharray="3 2.500"/></svg></button>
      <button class="filter"><svg viewBox="0 0 18 18"><path d="M1.500 2.500h15l-6 7v6l-3-2v-4z" fill="#e4e8ef" stroke="#333" stroke-width="1.200"/></svg>:0</button>
    </div>
  </footer>
</div>
<div class="behind"><i class="b-title"></i><i class="b-nav"></i><i class="b-tab"></i><i class="b-page"></i></div>
</div>
<nav class="taskbar" aria-label="Taskbar">
  <button class="orb" aria-label="Start"></button>
  <button class="t-blue" aria-label="Mail"></button><button class="t-yellow" aria-label="Explorer"></button><button class="t-red" aria-label="Browser"></button><button class="t-white" aria-label="Notes"></button><button class="t-cyan" aria-label="Viewer"></button><button class="t-crimson" aria-label="Reader"></button><button class="t-pale" aria-label="Revit"></button><button class="t-navy" aria-label="Capture"></button>
</nav>
</body>
</html>
```
FILE: styles.css
```
* { box-sizing: border-box; }
body {
  margin: 0; height: 100vh; display: flex; flex-direction: column; background: #000; color: #000;
  font: 12px/15px "Open Sans", "Noto Sans", sans-serif; overflow: hidden;
}
button { font: inherit; color: inherit; background: none; border: 0; padding: 0; margin: 0; white-space: nowrap; }
h2, h3, p, ul { margin: 0; padding: 0; font-weight: 400; }
ul { list-style: none; }
svg { display: block; flex: none; }
.defs { position: absolute; width: 0; height: 0; }

.desktop { flex: 1; min-height: 0; display: flex; padding-top: 8px; padding-left: 8px; }
.window { flex: 1; min-width: 0; display: flex; flex-direction: column; background: #f0f0f0; }

/* small triangles */
.dd { display: inline-block; width: 0; height: 0; border: 3px solid transparent; border-top-color: #444; border-bottom: 0; flex: none; }
.dd-lg { border-width: 4px 4px 0; }
.dd-off { border-top-color: #999; }
.dd-bar { position: relative; border-width: 4px 4px 0; margin-top: 3px; }
.dd-bar::before { content: ""; position: absolute; left: -4px; top: -8px; width: 8px; height: 2px; background: #444; }
.sep { width: 1px; margin: 1px 3px; background: #aaa; }

/* title bar */
.titlebar { height: 24px; display: flex; background: #000; flex: none; }
.app-button { width: 41px; height: 41px; flex: none; display: flex; align-items: center; gap: 4px; padding-left: 7px; z-index: 1; background: linear-gradient(#d4d6d8, #8b8b8b 60%, #b5b5b5); border: 1px solid #000; border-top-color: #ddd; position: relative; }
.qat, .info { display: flex; align-items: stretch; background: linear-gradient(#e6e6e6, #c3c3c3); border-top: 1px solid #bbb; border-bottom: 1px solid #777; }
.qat { padding: 0 1px 0 5px; border-right: 1px solid #888; }
.qat button, .info button { width: 24px; display: flex; align-items: center; justify-content: center; }
.qat button.drop, .info button.drop { width: 12px; }
.qat button.drop:last-child { width: 15px; }
.qat svg, .info svg { width: 18px; height: 18px; }
.info { margin-left: auto; border-left: 6px solid #555; }
.info button.info-toggle { width: 14px; }
.info .info-toggle svg { width: 5px; height: 8px; }
.info input { width: 179px; border: 1px solid #000; border-width: 1px 1px 1px 2px; background: #fff; padding: 0 2px; font: italic 12px "Open Sans", "Noto Sans", sans-serif; outline: 0; }
.info input::placeholder { color: #666; opacity: 1; }
.info button.sign-in { width: 122px; justify-content: flex-start; gap: 4px; padding-left: 3px; }
.sign-in .dd { margin-left: auto; margin-right: 7px; }
.info .exchange { margin-right: 2px; }
.info .help { margin-left: 3px; }
.frame-corner { width: 121px; background: linear-gradient(90deg, #888, #555); padding-left: 15px; padding-right: 2px; }
.win-buttons { display: flex; height: 18px; border: 1px solid #ddd; border-top: 0; border-radius: 0 0 5px 5px; overflow: hidden; background: linear-gradient(#a8a8a8, #4d4d4d 50%, #6a6a6a); }
.win-buttons button { flex: 28; display: flex; align-items: center; justify-content: center; border-right: 1px solid #ccc; }
.win-buttons .close { flex: 48; border: 0; background: linear-gradient(#d98d80, #b52e14 50%, #d4502a); }

/* tabs */
.tabs { height: 20px; flex: none; display: grid; grid-template-columns: 85px 68px 63px 49px 68px 61px 99px 81px 45px 63px 62px 58px 1fr; padding-left: 45px; background: #a0a0a0; }
.tabs a { display: block; text-align: center; text-decoration: none; color: #1c1c1c; line-height: 22px; white-space: nowrap; }
.tabs .active { background: linear-gradient(#d8d8d8, #fff); margin-top: 3px; line-height: 16px; border: 1px solid #fff; border-bottom: 0; }
.ribbon-toggle { justify-self: start; margin-left: 22px; }

/* ribbon */
.ribbon { height: 95px; flex: none; display: flex; background: #fff; color: #3a3a3a; border-bottom: 1px solid #fff; }
.panel { flex: none; display: flex; flex-direction: column; border-right: 2px solid #ababab; }
.tools { flex: 1; display: flex; }
.panel h2 { height: 18px; display: flex; align-items: center; justify-content: center; gap: 5px; font-size: 12px; line-height: 16px; background: #f0f0f0; border-top: 1px solid #c4c4c4; border-bottom: 1px solid #c4c4c4; color: #333; margin-right: 1px; }
.tool { flex: none; display: flex; flex-direction: column; align-items: center; padding-top: 6px; line-height: 15px; text-align: center; }
.tool span { margin: 5px -4px 0; }
.tool .dd { margin-top: 3px; }
.tool:disabled, .small button:disabled { color: #b0b0b0; }
.big { width: 30px; height: 30px; }
.p-select { width: 58px; padding-left: 2px; }
.p-select .tool { width: 44px; height: 72px; margin: 3px 0 0 6px; padding-top: 2px; background: linear-gradient(#cde1f6, #a9cdf0); border: 1px solid #2668b8; }
.p-dim { width: 433px; }
.p-dim .tools { display: grid; grid-template-columns: 46px 42px 44px 43px 50px 46px 54px 66px 38px; padding-left: 1px; }
.p-detail { width: 348px; }
.p-detail .tools { display: grid; grid-template-columns: 40px 57px 88px 50px 52px 57px; padding-left: 1px; }
.side { position: relative; }
.side .dd { position: absolute; right: 0; top: 52px; }
.p-text { width: 139px; }
.p-text .tools { display: grid; grid-template-columns: 44px 44px 48px; }
.panel h2:has(.launcher) { display: grid; grid-template-columns: 8px 1fr 8px; justify-items: center; padding-right: 4px; }
.panel h2:has(.launcher)::before { content: ""; }
.p-tag { width: 506px; }
.p-tag .tools { display: grid; grid-template-columns: 57px 38px 134px 88px 114px 1px 74px; }
.p-fill { width: 128px; }
.p-fill .tools { padding-left: 5px; }
.p-symbol { width: 223px; border-right: 0; }
.p-symbol .tools { display: grid; grid-template-columns: 51px 110px 60px; }
.ribbon-rest { flex: 1; background: linear-gradient(#dcdcdc, #a6a6a6); }
.small { display: grid; grid-template-rows: 24px 24px 24px; padding-top: 3px; }
.small button { display: flex; align-items: center; gap: 4px; }
.small svg { width: 18px; height: 18px; }
.col-a { padding-left: 3px; }
.divider { background: #c8c8c8; margin: 3px 0 2px; }
.t-abc { font: 700 11px "Liberation Sans", sans-serif; text-anchor: middle; fill: #333; }
.t-mini { font: 700 7px "Liberation Sans", sans-serif; fill: #333; }
.t-2d { font: 700 9px "Liberation Sans", sans-serif; fill: #7aa5cc; }

.options-bar { height: 27px; flex: none; background: #e1e2e4; }

/* docked palettes */
.work { flex: 1; min-height: 0; display: flex; background: #f0f0f0; }
.dock { width: 250px; flex: none; display: flex; flex-direction: column; padding-right: 5px; }
.palette-head { height: 18px; flex: none; display: flex; align-items: center; justify-content: space-between; padding: 0 6px 0 4px; background: #bfcddb; color: #444; white-space: nowrap; }
.palette-head h3 { font-size: 11px; line-height: 18px; }
.properties { height: 425px; flex: none; display: flex; flex-direction: column; border-bottom: 2px solid #fff; }
.type-selector { height: 73px; flex: none; margin: 3px 2px 0 1px; display: flex; align-items: center; gap: 4px; padding: 0 1px 0 2px; background: linear-gradient(#fafafa, #eee); border: 1px solid #999; border-right-color: #ddd; border-bottom-color: #ddd; color: #444; }
.thumb { width: 67px; height: 66px; display: grid; place-items: center; border: 1px solid #c8c8c8; background: #f6f6f6; }
.type-selector .dd { margin-left: auto; }
.instance { height: 25px; flex: none; display: flex; gap: 6px; padding: 1px 2px; color: #333; }
.instance select { width: 157px; height: 22px; appearance: none; border: 1px solid #707070; border-radius: 2px; font: inherit; padding: 0 2px; overflow: hidden; color: #000; background: linear-gradient(45deg, transparent 50%, #111 50%) right 7px top 9px / 4px 4px no-repeat, linear-gradient(-45deg, transparent 50%, #111 50%) right 3px top 9px / 4px 4px no-repeat, linear-gradient(#f4f4f4, #d4d4d4); }
.edit-type { display: flex; align-items: center; gap: 5px; height: 18px; }
.grid { flex: 1; background: #fff; margin: 0 2px; }
table { width: 100%; border-collapse: separate; border-spacing: 0; table-layout: fixed; line-height: 15px; }
.c-name { width: 115px; }
.c-link { width: 12px; }
td, th { height: 18px; padding: 0 0 0 2px; font-weight: 400; text-align: left; vertical-align: top; white-space: nowrap; border: 0 dotted #999; border-width: 0 1px 1px 0; }
th { padding-left: 8px; }
td:last-child { padding: 0; }
.group th, .group td { background: #dcdcdc; border: 0; vertical-align: middle; }
.group th { padding-left: 2px; }
.ro { color: #777; }
.in { padding-left: 5px; }
td button { display: block; width: 111px; height: 15px; margin-top: 2px; line-height: 12px; text-align: center; border: 1px solid #777; border-right-width: 2px; border-bottom-width: 2px; border-radius: 3px; background: linear-gradient(#f4f4f4, #cfcfcf); }
td:last-child button { width: 10px; }
.properties footer { height: 27px; margin-bottom: 3px; flex: none; display: flex; align-items: center; justify-content: space-between; padding: 0 4px; }
.properties footer a { color: #0b62c4; }
.properties footer button { width: 73px; height: 21px; border: 1px solid #bbb; border-radius: 3px; color: #888; background: #f4f4f4; }

.browser { flex: 1; min-height: 0; display: flex; flex-direction: column; border-bottom: 1px solid #fff; }
.tree-wrap { flex: 1; min-height: 0; display: flex; margin: 2px 2px 0 1px; background: #fff; border-top: 1px solid #777; }
.tree { flex: 1; min-width: 0; overflow: hidden; padding-left: 5px; white-space: nowrap; line-height: 18px; }
.root li { position: relative; padding-left: 20px; }
.root > li { padding-left: 0; }
.node { display: flex; align-items: center; gap: 6px; height: 18px; }
.ex { width: 9px; height: 9px; position: relative; z-index: 1; }
.ic { width: 16px; height: 16px; }
.root > li > .node { gap: 7px; }
.root ul { margin-left: 24px; }
.root li li { padding-left: 18px; height: 18px; }
.root li .open { height: auto; padding-left: 0; }
.open > .node { gap: 13px; margin-left: -4px; }
.open > ul { margin-left: 20px; }
.root > li::before, .root li li::before { content: ""; position: absolute; left: 4px; top: 0; bottom: 0; border-left: 1px dotted #999; }
.root li li::before { left: 0; }
.root li li:last-child::before { bottom: 9px; }
.root .open:last-child::before { display: none; }
.root li li::after { content: ""; position: absolute; left: 0; top: 9px; width: 15px; border-top: 1px dotted #999; }
.tree b { background: #e3e3e3; margin-left: -3px; padding: 0 3px; display: inline-block; }

/* scroll bars */
.vbar, .hbar { display: flex; align-items: center; background: #f0f0f0; flex: none; }
.vbar { flex-direction: column; }
.handle { background: linear-gradient(90deg, #f6f6f6, #d0d0d8); border: 1px solid #999; border-radius: 2px; }
.hbar .handle { background: linear-gradient(#f6f6f6, #ccc); }
.up, .down, .left, .right { width: 0; height: 0; border: 3px solid transparent; flex: none; }
.up { border-bottom: 4px solid #333; border-top: 0; margin: 8px 0; }
.down { border-top: 4px solid #333; border-bottom: 0; margin: auto 0 6px; }
.left { border-right: 4px solid #333; border-left: 0; margin: 0 8px; }
.right { border-left: 4px solid #333; border-right: 0; margin: 0 8px 0 auto; }
.tree-v { width: 16px; background: #ececec; }
.tree-v .handle { width: 15px; height: 80px; margin-top: 70px; display: grid; place-items: center; }
.tree-v .handle::before { content: ""; width: 7px; height: 8px; background: repeating-linear-gradient(#777 0 1px, transparent 1px 3px); }
.tree-h { height: 16px; margin-left: 1px; padding-right: 13px; }
.tree-h .handle { width: 137px; height: 14px; display: grid; place-items: center; }
.tree-h .handle::before { content: ""; width: 8px; height: 7px; background: repeating-linear-gradient(90deg, #777 0 1px, transparent 1px 3px); }

/* drawing view */
.view { flex: 1; min-width: 0; display: flex; flex-direction: column; border: solid #707070; border-width: 2px 0 0 2px; background: #f0f0f0; }
.view-top { flex: 1; min-height: 0; display: flex; }
.canvas { flex: 1; min-width: 0; position: relative; background: #fff; }
.drawing { width: 100%; height: 100%; }
.swing { stroke-dasharray: 36 17 2 17 37; }
.hinge { stroke-dasharray: 5 5; }
.lettering { font-family: Lato, "Open Sans", sans-serif; font-size: 10px; }
.heading { font-size: 14px; }
.dim, .label { text-anchor: middle; }
.dim { font-weight: 700; font-size: 9px; }
.notes { fill: #f00; }
.mdi { position: absolute; right: 4px; top: 8px; display: flex; gap: 6px; }
.navbar { position: absolute; right: 1px; top: 28px; width: 36px; height: 118px; border: 2px solid #c2c2c2; border-radius: 5px; background: #f4f4f4; display: flex; flex-direction: column; align-items: center; }
.corner { align-self: flex-end; margin: 2px 2px 10px 0; }
.navbar hr { width: 26px; border: 0; border-top: 1px solid #bbb; margin: 5px 0 6px; }
.navbar .dd { border-top-color: #999; margin-top: 3px; }
.navbar hr + button + .dd { margin-top: 9px; }
.corner.low { margin: auto 2px 2px 0; }
.view-v { width: 17px; padding-right: 2px; }
.view-v .up { margin: 7px 0 0; }
.view-v .handle { width: 15px; height: 15px; margin-top: 395px; }
.view-bar { height: 21px; flex: none; display: flex; align-items: center; padding: 0 0 3px 10px; }
.view-bar button { margin-right: 5px; }
.view-bar .scale { width: 63px; text-align: left; }
.view-bar .view-h { flex: 1; margin-right: 17px; margin-left: 9px; }
.view-h .left { margin: 0; }
.view-h .handle { width: 15px; height: 14px; margin-left: 728px; }

/* status bar */
.status { height: 24px; flex: none; display: grid; grid-template-columns: 948px 290px 1fr auto; align-items: center; padding: 0 62px 0 2px; background: linear-gradient(#fff 0 1px, #e0e0e0 2px, #c3c3c3); }
.status div, .status button { display: flex; align-items: center; }
.status svg { width: 18px; height: 18px; margin: 0 4px; }
.status .flat { background: #c6c6c6; height: 21px; }
.worksets .wide { width: 50px; }
.status select { height: 21px; appearance: none; border: 0; font: inherit; border-radius: 0; background: linear-gradient(45deg, transparent 50%, #888 50%) right 8px bottom 3px / 4px 4px no-repeat, linear-gradient(-45deg, transparent 50%, #888 50%) right 4px bottom 3px / 4px 4px no-repeat, #fff; }
.ws { width: 206px; }
.model { width: 156px; color: #888; opacity: 1; padding: 0 3px; }
.worksets .flat:first-child, .options .flat { width: 28px; }
.filter svg { margin-right: 0; }

/* window behind and taskbar */
.behind { width: 9px; display: flex; flex-direction: column; background: #fafafa; border-left: 1px solid #ddd; }
.b-title { height: 24px; background: linear-gradient(#6d6067, #c99a9a, #b9a2a8); }
.b-nav { height: 32px; background: radial-gradient(circle at 12px 14px, #2b5fae 10px, #d5d0d4 11px); }
.b-tab { height: 34px; margin-top: 2px; background: linear-gradient(#fff, #d9e6f5); border: solid #9aa8bb; border-width: 1px 0; }
.b-page { height: 20px; margin-top: 407px; border: 1px solid #bbb; border-right: 0; border-radius: 3px 0 0 3px; }
.taskbar { height: 8px; flex: none; display: flex; gap: 3px; padding-left: 14px; overflow: hidden; background: linear-gradient(90deg, #2a2630 0 40%, #3a3136 50%, #57404a 60%, #5b525b 75%, #3b333b 85%, #2a2528); }
.taskbar button { width: 59px; height: 14px; border: 1px solid #888; border-radius: 2px; background: #c9cbd2; }
.taskbar .orb { width: 40px; height: 30px; border-radius: 50%; background: #b7cbd8; margin-right: 11px; flex: none; }
.taskbar .t-blue { background: radial-gradient(ellipse 14px 8px at 50% 7px, #1d7fd1 90%, #8b8d98); }
.taskbar .t-yellow { background: radial-gradient(ellipse 14px 5px at 50% 7px, #e3c76a 90%, #77757f); }
.taskbar .t-red { background: radial-gradient(ellipse 12px 6px at 50% 8px, #d8453a 90%, #85838d); }
.taskbar .t-white { background: linear-gradient(90deg, #b9bac2 30%, #fff 30% 75%, #b9bac2 75%); }
.taskbar .t-cyan { background: linear-gradient(90deg, #85838d 30%, #62b8d8 30% 70%, #85838d 70%); }
.taskbar .t-crimson { background: radial-gradient(ellipse 12px 7px at 50% 7px, #c8202a 60%, #d9d9de); }
.taskbar .t-pale { background: radial-gradient(ellipse 12px 7px at 50% 7px, #4a7fc0 60%, #e3e5ec); }
.taskbar .t-navy { background: linear-gradient(90deg, #85838d 30%, #16345e 30% 70%, #85838d 70%); }
```
